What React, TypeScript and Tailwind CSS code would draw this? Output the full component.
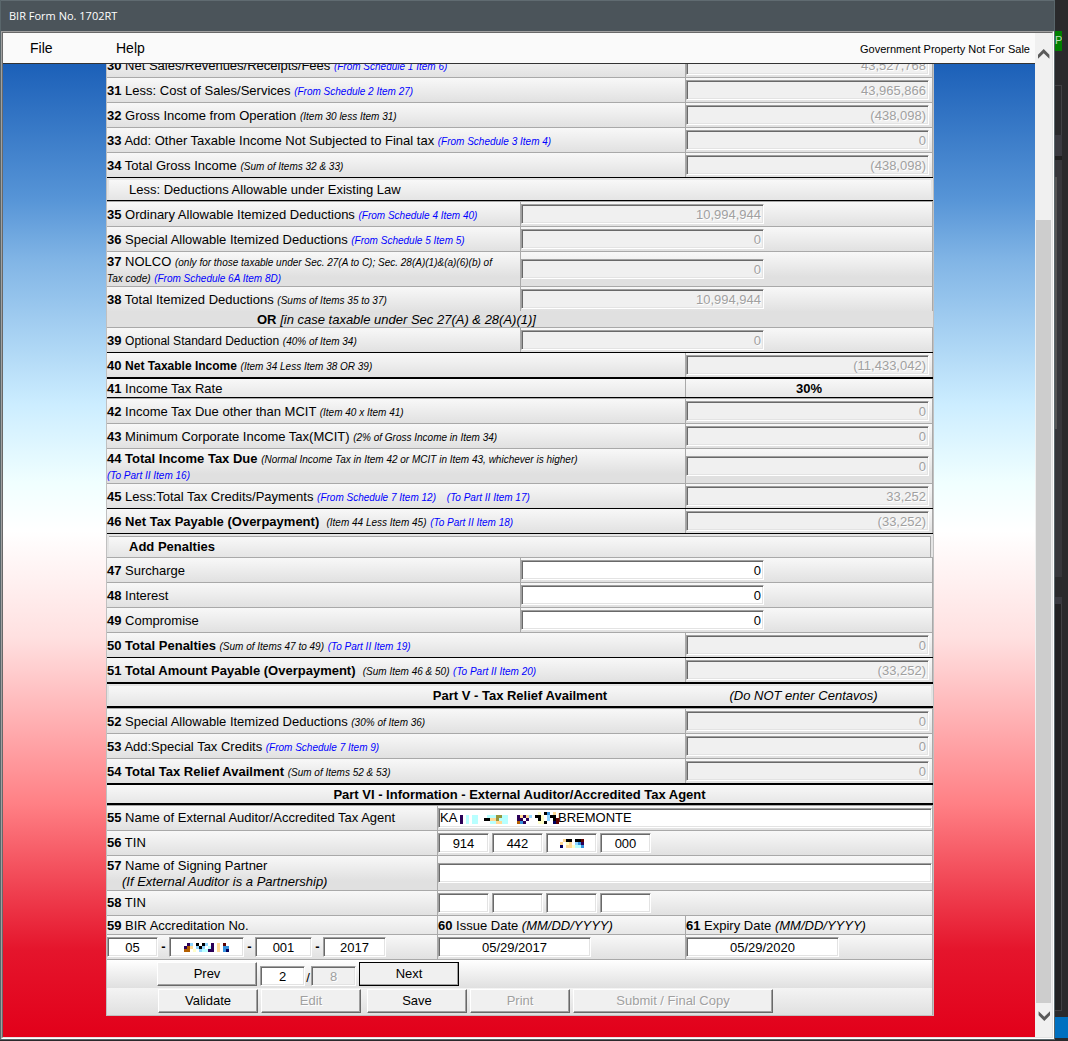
import React, { ReactNode } from "react";
import clsx from "clsx";

const SUNKEN =
  "border border-t-[#a0a0a0] border-l-[#a0a0a0] border-r-white border-b-white shadow-[inset_1px_1px_0_#696969,inset_-1px_-1px_0_#e3e3e3]";
const RAISED =
  "border border-t-white border-l-white border-r-[#696969] border-b-[#696969] shadow-[inset_-1px_-1px_0_#a0a0a0] bg-[#f0f0f0]";
const ROW_BG = "bg-[linear-gradient(#f8f8f8,#e0e0e0_25px)]";

type Line = "gray" | "black" | "thick" | "none";

const LINES: Record<Line, string> = {
  gray: "border-b border-b-[#a9a9a9]",
  black: "border-b border-b-black",
  thick: "border-b-2 border-b-black",
  none: "",
};

function Row({
  line = "gray",
  top = false,
  className = "min-h-6",
  children,
}: {
  line?: Line;
  top?: boolean;
  className?: string;
  children: ReactNode;
}) {
  return (
    <div className={clsx(LINES[line], top && "border-t border-t-[#a9a9a9]")}>
      <div className={clsx("flex border-r border-[#a9a9a9]", ROW_BG, className)}>{children}</div>
    </div>
  );
}

function Field({
  id,
  value = "",
  disabled = false,
  align = "right",
  width,
  label,
}: {
  id: string;
  value?: string;
  disabled?: boolean;
  align?: "right" | "center" | "left";
  width: string;
  label?: string;
}) {
  return (
    <input
      id={id}
      type="text"
      defaultValue={value}
      disabled={disabled}
      aria-label={label}
      className={clsx(
        SUNKEN,
        "h-5 min-w-0 px-[2px] leading-4 outline-none",
        width,
        align === "right" && "text-right",
        align === "center" && "text-center",
        disabled ? "bg-[#f0f0f0] text-[#a0a0a0] [text-shadow:1px_1px_0_#fff]" : "bg-white text-black"
      )}
    />
  );
}

function Note({ children }: { children: ReactNode }) {
  return <i className="text-[10px]">{children}</i>;
}

function Ref({ children }: { children: ReactNode }) {
  return (
    <a href="#schedule" className="text-[10px] text-[#0000ff] italic">
      {children}
    </a>
  );
}

function Item({
  no,
  value,
  mid = false,
  editable = false,
  line,
  top,
  tall = false,
  children,
}: {
  no: string;
  value: string;
  mid?: boolean;
  editable?: boolean;
  line?: Line;
  top?: boolean;
  tall?: boolean;
  children: ReactNode;
}) {
  return (
    <Row line={line} top={top} className={tall ? "min-h-[34px]" : "min-h-6"}>
      <label htmlFor={"item" + no} className="min-w-0 flex-1 self-center pt-px leading-[15px]">
        <b>{no}</b> {children}
      </label>
      <div
        className={clsx(
          "flex shrink-0 items-center border-l border-[#a9a9a9]",
          mid ? "w-[412px]" : "w-[247px]"
        )}
      >
        <Field id={"item" + no} value={value} disabled={!editable} width="w-[243px]" />
      </div>
    </Row>
  );
}

const PALETTE: Record<string, string> = {
  p: "#2b0057",
  c: "#b8ffff",
  k: "#000000",
  o: "#94963c",
  a: "#ffd894",
  r: "#b35f00",
  b: "#3590dc",
  l: "#90d5ff",
  y: "#ffffc8",
  n: "#00005c",
  m: "#5c0000",
};

function Mosaic({ rows, className }: { rows: string[]; className?: string }) {
  const cols = rows[0].length;
  return (
    <svg
      width={cols * 3}
      height={rows.length * 3}
      viewBox={`0 0 ${cols} ${rows.length}`}
      shapeRendering="crispEdges"
      className={clsx("shrink-0", className)}
      aria-hidden="true"
    >
      {rows.flatMap((row, y) =>
        row
          .split("")
          .map((ch, x) =>
            PALETTE[ch] ? <rect key={`${x}-${y}`} x={x} y={y} width="1" height="1" fill={PALETTE[ch]} /> : null
          )
      )}
    </svg>
  );
}

const NAME_MOSAIC = [
  "..........................y.kb.a.",
  "p.c.cc...cccoocc...papal.kky.lkk.",
  "p.c.cc..kkaaoccc...pp.p...ky.l.km",
  "p.c.cc....ccaacc...rbp....yyk..nm",
];
const TIN_MOSAIC = [".akk.kkm", "a.ya.lbp", "n.aayccb"];
const ACC_MOSAIC = [".pl.k.kl.p.a.m.", "pra.lkl.cp.a.bb", "rr.y.lccpp.a.bn"];

function MaskedField({ id, width, rows, label }: { id: string; width: string; rows: string[]; label: string }) {
  return (
    <span className={clsx("relative flex", width)}>
      <Field id={id} width="w-full" label={label} />
      <span className="pointer-events-none absolute inset-0 flex items-center justify-center">
        <Mosaic rows={rows} />
      </span>
    </span>
  );
}

function Btn({
  width = "w-[100px]",
  disabled = false,
  focus = false,
  children,
}: {
  width?: string;
  disabled?: boolean;
  focus?: boolean;
  children: ReactNode;
}) {
  return (
    <button
      type="button"
      disabled={disabled}
      className={clsx(
        RAISED,
        width,
        "h-6 leading-4",
        disabled ? "text-[#a0a0a0] [text-shadow:1px_1px_0_#fff]" : "text-black",
        focus && "outline outline-1 -outline-offset-1 outline-black"
      )}
    >
      {children}
    </button>
  );
}

function Chevron({ down = false }: { down?: boolean }) {
  return (
    <svg width="12" height="10" viewBox="0 0 12 10" aria-hidden="true" className={down ? "rotate-180" : ""}>
      <path d="M0 5.7 L5.7 0 L11.4 5.7 V9.8 L5.7 4.3 L0 9.8 Z" fill="#5a5a5a" />
    </svg>
  );
}

function Form() {
  return (
    <form className="mx-auto w-full max-w-[828px] border border-t-0 border-[#c0c0c0] bg-[#e0e0e0] text-[13px]">
      <Item no="30" value="43,527,768">
        Net Sales/Revenues/Receipts/Fees <Ref>(From Schedule 1 Item 6)</Ref>
      </Item>
      <Item no="31" value="43,965,866">
        Less: Cost of Sales/Services <Ref>(From Schedule 2 Item 27)</Ref>
      </Item>
      <Item no="32" value="(438,098)">
        Gross Income from Operation <Note>(Item 30 less Item 31)</Note>
      </Item>
      <Item no="33" value="0">
        Add: Other Taxable Income Not Subjected to Final tax <Ref>(From Schedule 3 Item 4)</Ref>
      </Item>
      <Item no="34" value="(438,098)" line="black">
        Total Gross Income <Note>(Sum of Items 32 &amp; 33)</Note>
      </Item>
      <div className="border-b border-black bg-[#e4e4e4] px-[2px] pt-[2px]">
        <h3 className={clsx("h-5 pl-5 leading-[19px]", ROW_BG)}>Less: Deductions Allowable under Existing Law</h3>
      </div>
      <Item no="35" value="10,994,944" mid top>
        Ordinary Allowable Itemized Deductions <Ref>(From Schedule 4 Item 40)</Ref>
      </Item>
      <Item no="36" value="0" mid>
        Special Allowable Itemized Deductions <Ref>(From Schedule 5 Item 5)</Ref>
      </Item>
      <Item no="37" value="0" mid tall>
        NOLCO <Note>(only for those taxable under Sec. 27(A to C); Sec. 28(A)(1)&amp;(a)(6)(b) of</Note>
        <br />
        <Note>Tax code)</Note> <Ref>(From Schedule 6A Item 8D)</Ref>
      </Item>
      <Item no="38" value="10,994,944" mid line="none">
        Total Itemized Deductions <Note>(Sums of Items 35 to 37)</Note>
      </Item>
      <p className="border-b border-[#a9a9a9] bg-[#e0e0e0] pt-px pl-[150px] leading-[15px]">
        <b>OR</b> <i>[in case taxable under Sec 27(A) &amp; 28(A)(1)]</i>
      </p>
      <Item no="39" value="0" mid line="black">
        <span className="text-[12px]">Optional Standard Deduction</span> <Note>(40% of Item 34)</Note>
      </Item>
      <Item no="40" value="(11,433,042)" line="thick">
        <b className="text-[12px]">Net Taxable Income</b> <Note>(Item 34 Less Item 38 OR 39)</Note>
      </Item>
      <Row line="black" className="h-[18px] leading-5">
        <span className="flex-1">
          <b>41</b> Income Tax Rate
        </span>
        <b className="w-[247px] border-l border-[#a9a9a9] text-center">30%</b>
      </Row>
      <Item no="42" value="0" top>
        Income Tax Due other than MCIT <Note>(Item 40 x Item 41)</Note>
      </Item>
      <Item no="43" value="0">
        Minimum Corporate Income Tax(MCIT) <Note>(2% of Gross Income in Item 34)</Note>
      </Item>
      <Item no="44" value="0" tall>
        <b>Total Income Tax Due</b> <Note>(Normal Income Tax in Item 42 or MCIT in Item 43, whichever is higher)</Note>
        <br />
        <Ref>(To Part II Item 16)</Ref>
      </Item>
      <Item no="45" value="33,252" line="black">
        Less:Total Tax Credits/Payments <Ref>(From Schedule 7 Item 12)</Ref>
        {"\u00a0\u00a0 "}
        <Ref>(To Part II Item 17)</Ref>
      </Item>
      <Item no="46" value="(33,252)" line="black">
        <b>Net Tax Payable (Overpayment)</b>&nbsp; <Note>(Item 44 Less Item 45)</Note> <Ref>(To Part II Item 18)</Ref>
      </Item>
      <div className="border-b border-[#a9a9a9] bg-[#e4e4e4] px-[2px] pt-[2px]">
        <h3
          className={clsx("h-[21px] border-t border-r border-[#a9a9a9] pl-5 leading-[19px] font-bold", ROW_BG)}
        >
          Add Penalties
        </h3>
      </div>
      <Item no="47" value="0" mid editable>
        Surcharge
      </Item>
      <Item no="48" value="0" mid editable>
        Interest
      </Item>
      <Item no="49" value="0" mid editable>
        Compromise
      </Item>
      <Item no="50" value="0" line="black">
        <b>Total Penalties</b> <Note>(Sum of Items 47 to 49)</Note> <Ref>(To Part II Item 19)</Ref>
      </Item>
      <Item no="51" value="(33,252)" line="thick">
        <b>Total Amount Payable (Overpayment)</b>&nbsp; <Note>(Sum Item 46 &amp; 50)</Note>{" "}
        <Ref>(To Part II Item 20)</Ref>
      </Item>
      <div className="border-b-2 border-black bg-[#e4e4e4] px-[2px] pt-[2px]">
        <div className={clsx("flex h-5 leading-[19px]", ROW_BG)}>
          <h2 className="flex-1 pl-[247px] text-center font-bold">Part V - Tax Relief Availment</h2>
          <i className="w-[247px] pr-2 text-center">(Do NOT enter Centavos)</i>
        </div>
      </div>
      <Item no="52" value="0" top>
        Special Allowable Itemized Deductions <Note>(30% of Item 36)</Note>
      </Item>
      <Item no="53" value="0">
        Add:Special Tax Credits <Ref>(From Schedule 7 Item 9)</Ref>
      </Item>
      <Item no="54" value="0" line="thick">
        <b>Total Tax Relief Availment</b> <Note>(Sum of Items 52 &amp; 53)</Note>
      </Item>
      <Row line="thick" className="h-[18px] leading-5">
        <h2 className="flex-1 text-center font-bold">Part VI - Information - External Auditor/Accredited Tax Agent</h2>
      </Row>

      <Row top>
        <label htmlFor="auditor" className="flex-1 self-center">
          <b>55</b> Name of External Auditor/Accredited Tax Agent
        </label>
        <div className="flex w-[495px] items-center border-l border-[#a9a9a9]">
          <div className={clsx(SUNKEN, "flex h-5 flex-1 items-center bg-white pl-px")}>
            <input id="auditor" defaultValue="KA" className="w-5 bg-transparent leading-4 outline-none" />
            <Mosaic rows={NAME_MOSAIC} className="-mr-px" />
            <input
              aria-label="Auditor surname"
              defaultValue="BREMONTE"
              className="min-w-0 flex-1 bg-transparent leading-4 outline-none"
            />
          </div>
        </div>
      </Row>
      <Row>
        <label htmlFor="tin56a" className="flex-1 self-center">
          <b>56</b> TIN
        </label>
        <div className="flex w-[495px] items-center gap-[3px] border-l border-[#a9a9a9]">
          <Field id="tin56a" value="914" align="center" width="w-[51px]" />
          <Field id="tin56b" value="442" align="center" width="w-[51px]" label="TIN part 2" />
          <MaskedField id="tin56c" width="w-[51px]" rows={TIN_MOSAIC} label="TIN part 3" />
          <Field id="tin56d" value="000" align="center" width="w-[51px]" label="TIN part 4" />
        </div>
      </Row>
      <Row className="min-h-[34px]">
        <label htmlFor="partner" className="flex-1 self-center pt-px leading-4">
          <b>57</b> Name of Signing Partner
          <i className="block pl-[15px]">(If External Auditor is a Partnership)</i>
        </label>
        <div className="flex w-[495px] items-center border-l border-[#a9a9a9]">
          <Field id="partner" align="left" width="w-full" />
        </div>
      </Row>
      <Row>
        <label htmlFor="tin58a" className="flex-1 self-center">
          <b>58</b> TIN
        </label>
        <div className="flex w-[495px] items-center gap-[3px] border-l border-[#a9a9a9]">
          <Field id="tin58a" align="center" width="w-[51px]" />
          <Field id="tin58b" align="center" width="w-[51px]" label="Partner TIN part 2" />
          <Field id="tin58c" align="center" width="w-[51px]" label="Partner TIN part 3" />
          <Field id="tin58d" align="center" width="w-[51px]" label="Partner TIN part 4" />
        </div>
      </Row>
      <Row className="h-[18px] leading-5">
        <label htmlFor="acc1" className="flex-1">
          <b>59</b> BIR Accreditation No.
        </label>
        <label htmlFor="issue" className="w-[248px] border-l border-[#a9a9a9]">
          <b>60</b> Issue Date <i>(MM/DD/YYYY)</i>
        </label>
        <label htmlFor="expiry" className="w-[247px] border-l border-[#a9a9a9]">
          <b>61</b> Expiry Date <i>(MM/DD/YYYY)</i>
        </label>
      </Row>
      <Row>
        <div className="flex flex-1 items-center">
          <Field id="acc1" value="05" align="center" width="w-[51px]" />
          <b className="w-[11px] text-center">-</b>
          <MaskedField id="acc2" width="w-[75px]" rows={ACC_MOSAIC} label="Accreditation number part 2" />
          <b className="w-[11px] text-center">-</b>
          <Field id="acc3" value="001" align="center" width="w-[57px]" label="Accreditation number part 3" />
          <b className="w-[11px] text-center">-</b>
          <Field id="acc4" value="2017" align="center" width="w-[63px]" label="Accreditation number part 4" />
        </div>
        <div className="flex w-[248px] items-center border-l border-[#a9a9a9]">
          <Field id="issue" value="05/29/2017" align="center" width="w-[153px]" />
        </div>
        <div className="flex w-[247px] items-center border-l border-[#a9a9a9]">
          <Field id="expiry" value="05/29/2020" align="center" width="w-[153px]" />
        </div>
      </Row>
      <div className="flex h-7 items-end border-r border-[#a9a9a9] bg-linear-to-b from-white to-[#e0e0e0] pb-[2px] pl-[50px]">
        <Btn>Prev</Btn>
        <span className="ml-[3px] flex items-end">
          <Field id="page" value="2" align="center" width="w-[45px]" label="Page" />
          <span className="w-[6px] text-center leading-4">/</span>
          <Field id="pages" value="8" align="center" width="w-[45px]" disabled label="Page count" />
        </span>
        <span className="ml-[3px] flex">
          <Btn focus>Next</Btn>
        </span>
      </div>
      <div className="flex h-[27px] items-start gap-[3px] border-r border-[#a9a9a9] bg-linear-to-b from-[#f4f4f4] to-[#e0e0e0] pt-px pl-[51px]">
        <Btn>Validate</Btn>
        <Btn disabled>Edit</Btn>
        <span className="ml-[3px] flex">
          <Btn>Save</Btn>
        </span>
        <Btn disabled>Print</Btn>
        <Btn disabled width="w-[200px]">
          Submit / Final Copy
        </Btn>
      </div>
    </form>
  );
}

function Desktop() {
  return (
    <aside className="flex w-[13px] shrink-0 flex-col bg-[#2a2a2c]" aria-hidden="true">
      <div className="h-[31px]" />
      <div className="h-5 w-[7px] overflow-hidden bg-[#008000] text-[11px] leading-[18px] text-[#b8d8b8]">P</div>
      <div className="mt-[34px] h-[50px] w-[7px] border-t border-r border-[#414144]" />
      <div className="h-[21px] w-[7px] bg-[#3a3a40]" />
      <div className="h-1 w-[7px] bg-[#202020]" />
      <div className="h-[417px] w-[7px] bg-[#37373b]">
        <div className="h-[17px]" />
        <div className="h-[252px] w-[2px] bg-[#555]" />
      </div>
      <div className="mt-5 h-[7px] w-[7px] bg-[#3a3a40]" />
      <div className="w-[7px] flex-1 border-r border-b border-[#414144] bg-[#222223]" />
      <div className="mt-[6px] mb-[3px] h-[21px] bg-[#0070c0]" />
    </aside>
  );
}

export default function App() {
  return (
    <div className="flex h-screen overflow-hidden bg-[#2a2a2c] text-black [font-family:'Liberation_Sans',Arial,sans-serif]">
      <div className="mb-px flex min-w-0 flex-1 flex-col border border-t-0 border-[#59666b] bg-[#4b545a]">
        <header className="flex h-[31px] shrink-0 items-center border-t border-[#606b71] pl-2">
          <h1 className="text-[11px] text-white [font-family:'Open_Sans','Noto_Sans',sans-serif]">BIR Form No. 1702RT</h1>
        </header>
        <div className="flex min-h-0 flex-1 border border-t-[#a0a0a0] border-r-white border-b-white border-l-[#a0a0a0]">
          <div className="flex min-w-0 flex-1 border border-t-[#696969] border-r-[#e3e3e3] border-b-[#e3e3e3] border-l-[#696969]">
            <div className="flex min-w-0 flex-1 flex-col">
              <nav className="flex h-[31px] shrink-0 items-baseline border-b border-[#333] bg-[#fafafa] pr-[5px] pl-[27px] text-[14px] leading-[29px]">
                <button type="button" className="w-[86px] text-left">
                  File
                </button>
                <button type="button">Help</button>
                <span className="ml-auto pt-[2px] text-[11px]">Government Property Not For Sale</span>
              </nav>
              <main className="min-h-0 flex-1 overflow-hidden bg-[linear-gradient(#1c60b8_0%,#5795d7_14%,#80b4e5_20%,#ccedff_35%,#f0ffff_43%,#ffffff_48%,#ffe0e0_59%,#ff8085_76%,#e5152c_91%,#e2001a_100%)] pl-[2px]">
                <div className="-mt-[11px]">
                  <Form />
                </div>
              </main>
            </div>
            <div className="flex w-[17px] shrink-0 flex-col items-center bg-[#f0f0f0] pt-4 pb-4" aria-hidden="true">
              <Chevron />
              <div className="mt-[161px] mb-2 w-[15px] flex-1 bg-[#cdcdcd]" />
              <Chevron down />
            </div>
          </div>
        </div>
      </div>
      <Desktop />
    </div>
  );
}
